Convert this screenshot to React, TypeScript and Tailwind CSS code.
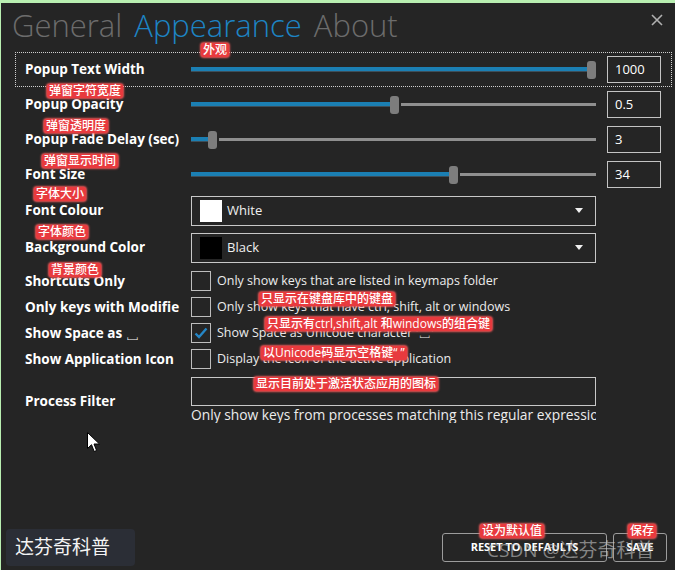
import React from 'react';

const sliders = [
  { label: 'Popup Text Width', value: '1000', pct: 100, focus: true },
  { label: 'Popup Opacity', value: '0.5', pct: 50.2 },
  { label: 'Popup Fade Delay (sec)', value: '3', pct: 4.3 },
  { label: 'Font Size', value: '34', pct: 65.2 },
];

const colours = [
  { label: 'Font Colour', name: 'White', swatch: 'bg-white' },
  { label: 'Background Color', name: 'Black', swatch: 'bg-black' },
];

const checks = [
  { label: 'Shortcuts Only', text: 'Only show keys that are listed in keymaps folder', on: false },
  { label: 'Only keys with Modifie', text: 'Only show keys that have ctrl, shift, alt or windows', on: false },
  { label: 'Show Space as \u2423', text: "Show Space as Unicode character '\u2423'", on: true },
  { label: 'Show Application Icon', text: 'Display the icon of the active application', on: false },
];

// red annotation stickers drawn over the screenshot
const notes = [
  { text: '外观', x: 200, y: 40 },
  { text: '弹窗字符宽度', x: 46, y: 81 },
  { text: '弹窗透明度', x: 43, y: 116 },
  { text: '弹窗显示时间', x: 41, y: 151 },
  { text: '字体大小', x: 33, y: 184 },
  { text: '字体颜色', x: 35, y: 222 },
  { text: '背景颜色', x: 48, y: 260 },
  { text: '只显示在键盘库中的键盘', x: 258, y: 289 },
  { text: '只显示有ctrl,shift,alt 和windows的组合键', x: 264, y: 314 },
  { text: '以Unicode码显示空格键“ ”', x: 260, y: 343 },
  { text: '显示目前处于激活状态应用的图标', x: 253, y: 374 },
  { text: '设为默认值', x: 479, y: 521 },
  { text: '保存', x: 627, y: 521 },
];

const Slider = ({ pct }: { pct: number }) => (
  <div className="flex h-[18px] w-full items-center">
    <div className="h-[5px] shrink-0 border-b border-[#3d4f5a] bg-[#1b7fb3]" style={{ width: `calc((100% - 9px) * ${pct / 100})` }} />
    <div className="h-[18px] w-[9px] shrink-0 rounded-[3px] bg-[#7d7d7d]" />
    <div className="ml-[2px] h-[3px] flex-1 bg-[#8f8f8f]" />
  </div>
);

const App = () => {
  return (
    <div className="relative h-[570px] w-[675px] overflow-hidden border-l border-t-[3px] border-[#b9efb1] bg-[#252525] font-['Open_Sans','Noto_Sans_CJK_SC',sans-serif] text-white">
      <header className="flex h-[49px] items-start justify-between pl-[11px] pr-[12px]">
        <div className="flex gap-[12px] pt-[3px] text-[31px] font-light leading-[39px]">
          <span className="text-[#6c6c6c]">General</span>
          <span className="text-[#1d84c4]">Appearance</span>
          <span className="text-[#6c6c6c]">About</span>
        </div>
        <svg width="12" height="12" viewBox="0 0 12 12" className="mt-[11px]">
          <path d="M1 1L11 11M11 1L1 11" stroke="#b0b0b0" strokeWidth="1.6" />
        </svg>
      </header>

      <div className="ml-[14px] w-[657px]">
        {sliders.map((s) => (
          <div
            key={s.label}
            className={`grid h-[35px] grid-cols-[155px_405px_54px] items-center gap-x-[11px] pl-[9px] ${
              s.focus ? 'border border-dotted border-[#d0d0d0]' : 'border border-transparent'
            }`}
          >
            <span className="whitespace-nowrap text-[13.5px] font-bold">{s.label}</span>
            <Slider pct={s.pct} />
            <div className="flex h-[27px] items-center border border-[#c4c4c4] pl-[7px] text-[13px]">{s.value}</div>
          </div>
        ))}

        {colours.map((c) => (
          <div key={c.label} className="grid h-[37px] grid-cols-[155px_405px] items-center gap-x-[11px] pl-[10px]">
            <span className="whitespace-nowrap text-[13.5px] font-bold">{c.label}</span>
            <div className="flex h-[30px] items-center border border-[#c8c8c8] pl-[8px] pr-[12px]">
              <div className={`h-[22px] w-[22px] ${c.swatch}`} />
              <span className="ml-[5px] flex-1 text-[13px] text-[#f0f0f0]">{c.name}</span>
              <svg width="8" height="5" viewBox="0 0 8 5">
                <path d="M0 0H8L4 5Z" fill="#f0f0f0" />
              </svg>
            </div>
          </div>
        ))}

        <div className="mt-[2px]">
          {checks.map((c) => (
            <div key={c.label} className="grid h-[26px] grid-cols-[155px_405px] items-center gap-x-[11px] pl-[10px]">
              <span className="whitespace-nowrap text-[13.5px] font-bold">{c.label}</span>
              <div className="flex items-center gap-[6px]">
                <div className="flex h-[20px] w-[20px] items-center justify-center border border-[#bdbdbd]">
                  {c.on && (
                    <svg width="14" height="12" viewBox="0 0 14 12">
                      <path d="M1.5 6.5L5 10L12.5 1.5" fill="none" stroke="#2586c6" strokeWidth="2.4" />
                    </svg>
                  )}
                </div>
                <span className="whitespace-nowrap text-[12.5px] text-[#ececec]">{c.text}</span>
              </div>
            </div>
          ))}
        </div>

        <div className="mt-[5px] grid grid-cols-[155px_405px] items-center gap-x-[11px] pl-[10px]">
          <span className="pt-[2px] text-[13.5px] font-bold">Process Filter</span>
          <div className="flex flex-col">
            <div className="h-[29px] border border-[#c8c8c8]" />
            <span className="overflow-hidden whitespace-nowrap text-[13.8px] leading-[17px] text-[#ececec]">
              Only show keys from processes matching this regular expression
            </span>
          </div>
        </div>
      </div>

      <svg width="13" height="21" viewBox="0 0 13 21" className="absolute left-[86px] top-[429px]">
        <path d="M0.5 0.5V16.5L4.5 12.7L7.2 19.5L9.6 18.5L7 12H12.5Z" fill="#fff" stroke="#000" strokeWidth="1" />
      </svg>

      <div className="absolute bottom-[4px] left-[5px] flex h-[37px] w-[129px] items-center rounded-[4px] bg-[#2b2e36] pl-[9px] text-[19px] text-[#f4f4f4]">
        达芬奇科普
      </div>

      <div className="absolute bottom-[8px] right-[8px] flex gap-[6px]">
        <button className="h-[29px] w-[165px] rounded-[3px] border border-[#9c9c9c] text-[11px] font-bold">RESET TO DEFAULTS</button>
        <button className="h-[29px] w-[54px] rounded-[3px] border border-[#9c9c9c] text-[11px] font-bold">SAVE</button>
      </div>

      <div className="pointer-events-none absolute left-[486px] top-[535px] text-[19px] leading-[24px] text-[#c8c8c8]/60">
        CSDN @达芬奇科普
      </div>

      {notes.map((n) => (
        <div
          key={n.text}
          className="absolute whitespace-nowrap rounded-[3px] bg-[#e83a3e] px-[2px] text-[12px] font-medium leading-[14px] text-white shadow-[0_0_2px_1px_rgba(255,90,90,0.9)]"
          style={{ left: n.x, top: n.y }}
        >
          {n.text}
        </div>
      ))}
    </div>
  );
};

export default App;
